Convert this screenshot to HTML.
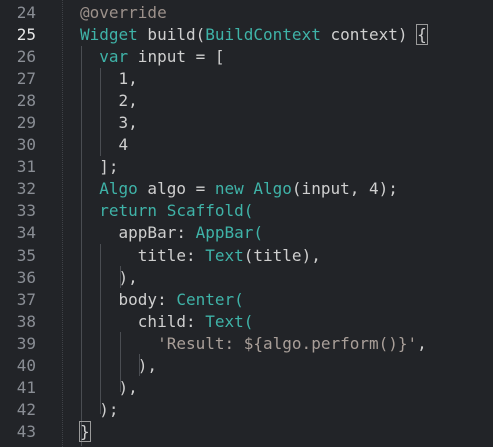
<!DOCTYPE html>
<html><head><meta charset="utf-8"><style>
html,body{margin:0;padding:0;background:#222428;width:493px;height:447px;overflow:hidden}
.wrap{position:relative;width:493px;height:447px;font-family:"DejaVu Sans Mono","Liberation Mono",monospace;font-size:16px}
.nums{position:absolute;left:0;top:2px;width:36px;text-align:right;color:#8a8e95;line-height:22.05px;white-space:pre}
.cur{color:#e6e6e6}
.code{position:absolute;left:80px;top:2px;white-space:pre;color:#cfcfcf;line-height:22.05px}
.t{color:#3fb3a8}
.a{color:#9c918b}
.s{color:#a99f99}
.g{position:absolute;width:1px;background:#4a4d52}
.gd{position:absolute;left:62px;top:0;height:447px;border-left:1px dotted #3e4146}
.br{outline:1px solid #9a9a9a}
</style></head><body><div class="wrap">
<div class="gd"></div>
<div class="g" style="left:81px;top:46px;height:400px"></div>
<div class="g" style="left:100px;top:68px;height:88px"></div>
<div class="g" style="left:100px;top:244px;height:170px"></div>
<div class="g" style="left:120px;top:266px;height:22px"></div>
<div class="g" style="left:120px;top:332px;height:60px"></div>
<div class="g" style="left:139px;top:354px;height:22px"></div>
<div class="nums">24
<span class="cur">25</span>
26
27
28
29
30
31
32
33
34
35
36
37
38
39
40
41
42
43</div>
<div class="code"><span class="a">@override</span>
<span class="t">Widget</span> build(<span class="t">BuildContext</span> context) <span class="br">{</span>
  <span class="t">var</span> input = [
    1,
    2,
    3,
    4
  ];
  <span class="t">Algo</span> algo = <span class="t">new Algo</span>(input, 4);
  <span class="t">return Scaffold(</span>
    appBar: <span class="t">AppBar(</span>
      title: <span class="t">Text</span>(title),
    ),
    body: <span class="t">Center(</span>
      child: <span class="t">Text(</span>
        <span class="s">'Result: ${algo.perform()}'</span>,
      ),
    ),
  );
<span class="br">}</span></div>
</div></body></html>
